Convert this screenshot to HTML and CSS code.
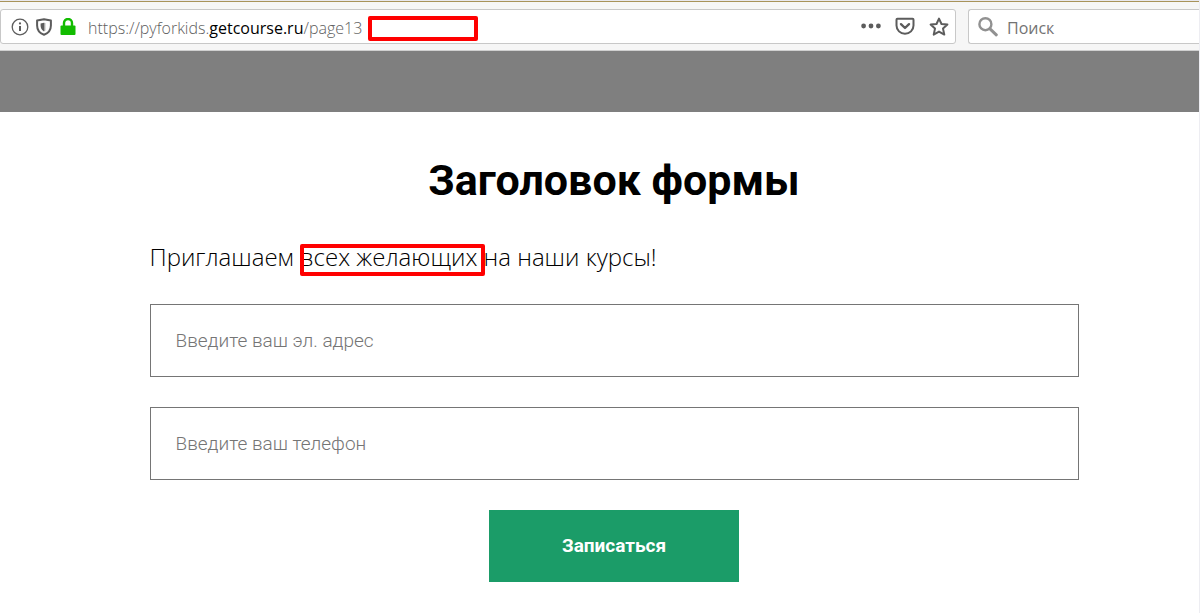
FILE: index.html
```html
<!DOCTYPE html>
<html lang="ru">

<head>
    <meta charset="UTF-8">
    <meta name="viewport" content="width=device-width, initial-scale=1.0">
    <title>Заголовок формы</title>
    <link rel="stylesheet" href="styles.css">
</head>

<body>
    <header class="toolbar">
        <div class="address">
            <button class="icon" aria-label="Информация о сайте">
                <svg width="18" height="18" viewBox="0 0 18 18" fill="none" stroke="#5c5c5c">
                    <circle cx="9" cy="9" r="7.8" stroke-width="1.3" />
                    <path d="M9 8v5" stroke-width="2" />
                    <circle cx="9" cy="5.4" r="1.1" fill="#5c5c5c" stroke="none" />
                </svg>
            </button>
            <button class="icon" aria-label="Защита">
                <svg width="18" height="18" viewBox="0 0 18 18">
                    <path d="M9 1.2 L15.9 2.6 V7.5 C15.9 12 13 15.3 9 16.8 C5 15.3 2.1 12 2.1 7.5 V2.6 Z" fill="none" stroke="#5c5c5c" stroke-width="2" stroke-linejoin="round" />
                    <path d="M9 4.8 V13.4 C6.7 12 5.6 10.2 5.6 7.5 V5.4 Z" fill="#5c5c5c" />
                    <path d="M9 4.8 L10.4 5 V12.4 L9 13.4 Z" fill="#aaa" />
                </svg>
            </button>
            <button class="icon" aria-label="Соединение">
                <svg width="18" height="18" viewBox="0 0 18 18">
                    <path d="M5 9 V5 a4 4 0 0 1 8 0 V9" fill="none" stroke="#12bc00" stroke-width="2.4" />
                    <rect x="1.5" y="7.5" width="15" height="9.5" rx="1" fill="#12bc00" />
                </svg>
            </button>
            <div class="url">https://pyforkids.<b>getcourse.ru</b>/page13</div>
            <span class="frame"></span>
            <div class="actions">
                <button class="icon" aria-label="Меню">
                    <svg width="20" height="20" viewBox="0 0 20 20" fill="#5c5c5c">
                        <circle cx="2.6" cy="9" r="2.4" />
                        <circle cx="10" cy="9" r="2.4" />
                        <circle cx="17.4" cy="9" r="2.4" />
                    </svg>
                </button>
                <button class="icon" aria-label="Pocket">
                    <svg width="20" height="20" viewBox="0 0 20 20" fill="none" stroke="#5c5c5c" stroke-width="2" stroke-linejoin="round" stroke-linecap="round">
                        <path d="M2.4 1.8 H17.6 Q18.5 1.8 18.5 2.7 V8.5 A8.5 8.3 0 0 1 1.5 8.5 V2.7 Q1.5 1.8 2.4 1.8 Z" />
                        <path d="M6 7.2 L10 11 L14 7.2" stroke-width="2.4" />
                    </svg>
                </button>
                <button class="icon" aria-label="Закладка">
                    <svg width="20" height="20" viewBox="0 0 20 20" fill="none" stroke="#5c5c5c" stroke-width="2" stroke-linejoin="round">
                        <path d="M10 1.6 L12.5 7 L18.4 7.6 L14 11.6 L15.3 17.6 L10 14.6 L4.7 17.6 L6 11.6 L1.6 7.6 L7.5 7 Z" />
                    </svg>
                </button>
            </div>
        </div>
        <label class="search">
            <svg width="20" height="20" viewBox="0 0 20 20" fill="none" stroke="#919191">
                <circle cx="7.4" cy="7.2" r="6" stroke-width="2.4" />
                <path d="M12 11.8 L18.3 17.8" stroke-width="3" stroke-linecap="round" />
            </svg>
            <input type="text" placeholder="Поиск" aria-label="Поиск">
        </label>
    </header>

    <div class="band"></div>

    <main class="section">
        <form class="form">
            <h1>Заголовок формы</h1>
            <p>Приглашаем <span class="marked">всех желающих</span> на наши курсы!</p>
            <input type="email" placeholder="Введите ваш эл. адрес" aria-label="Введите ваш эл. адрес">
            <input type="tel" placeholder="Введите ваш телефон" aria-label="Введите ваш телефон">
            <button type="submit">Записаться</button>
        </form>
    </main>
</body>

</html>
```
FILE: styles.css
```css
* {
    margin: 0;
    padding: 0;
    box-sizing: border-box;
}

body {
    background-color: #fff;
    font-family: 'Roboto', sans-serif;
    color: #000;
    border-right: 1px solid #ededf2;
    min-height: 100vh;
}

button {
    border: 0;
    background: none;
    cursor: pointer;
}

svg {
    display: block;
}

/* browser bar */
.toolbar {
    display: flex;
    gap: 12px;
    background-color: #f6f6f6;
    background-image: linear-gradient(#e8e8ee 1px, #a8935a 1px, #a8935a 2px, transparent 2px);
    border-bottom: 1px solid #d0d0d0;
    padding-top: 9px;
    padding-bottom: 6px;
    font-family: 'Open Sans', sans-serif;
    font-size: 16px;
}

.address,
.search {
    display: flex;
    align-items: center;
    height: 35px;
    background-color: #fff;
    border: 1px solid #c8c8c8;
    border-radius: 3px;
}

.address {
    flex: 1;
    gap: 6px;
    padding: 0 6px 0 10px;
}

.url {
    margin-left: 5px;
    padding-top: 2px;
    color: #606060;
    font-weight: 300;
    white-space: nowrap;
}

.url b {
    color: #000;
    font-weight: 400;
}

.frame {
    width: 110px;
    height: 25px;
    margin-top: 4px;
    border: 4px solid #f00;
    border-radius: 2px;
}

.actions {
    display: flex;
    gap: 14px;
    margin-left: auto;
}

.search {
    width: 231px;
    gap: 9px;
    padding-left: 9px;
    border-right: 0;
    border-radius: 3px 0 0 3px;
}

.search input {
    flex: 1;
    min-width: 0;
    padding-top: 2px;
    border: 0;
    outline: 0;
    font: inherit;
}

.search input::placeholder {
    color: #737373;
}

.band {
    height: 61px;
    background-color: #7f7f7f;
}

/* form */
.section {
    padding: 40px 0 30px 29px;
}

.form {
    width: 90%;
    max-width: 929px;
    margin: 0 auto;
}

.form h1 {
    font-size: 43px;
    font-weight: 700;
    line-height: 56px;
    text-align: center;
}

.form p {
    margin: 31px 0 29px;
    font-family: 'Open Sans', sans-serif;
    font-size: 24px;
    font-weight: 300;
    line-height: 36px;
}

.marked {
    position: relative;
}

.marked::after {
    content: "";
    position: absolute;
    inset: 4px -8px -3px 0;
    border: 4px solid #f00;
    border-radius: 2px;
}

.form input {
    display: block;
    width: 100%;
    height: 73px;
    margin-bottom: 30px;
    padding: 0 25px;
    border: 1px solid #757575;
    outline: 0;
    font-family: 'Roboto', sans-serif;
    font-size: 19px;
    font-weight: 300;
}

.form input::placeholder {
    color: #757575;
}

.form button {
    display: block;
    width: 250px;
    height: 72px;
    margin: 0 auto;
    padding-bottom: 2px;
    background-color: #1b9c68;
    color: #fff;
    font-family: 'Roboto', sans-serif;
    font-size: 19px;
    font-weight: 700;
}
```
